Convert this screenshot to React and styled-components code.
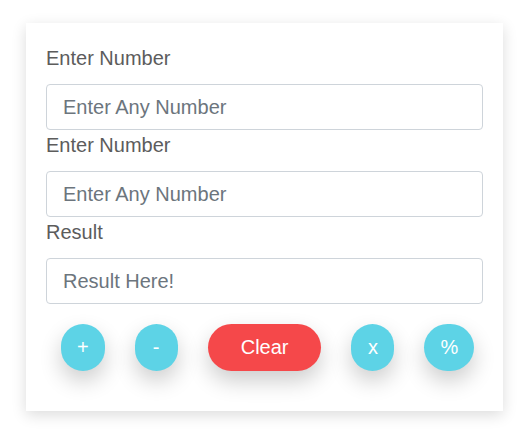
import React from 'react';
import styled, { createGlobalStyle } from 'styled-components';

const GlobalStyle = createGlobalStyle`
	body {
		margin: 0;
		background: #fff;
		font-family: "Liberation Sans", Arial, sans-serif;
	}
`

const Page = styled.div`
	padding: 23px 0 30px 26px;
`

const Card = styled.div`
	width: 477px;
	box-sizing: border-box;
	padding: 20px 20px 40px;
	background: #fff;
	box-shadow: 0 4px 14px rgba(0, 0, 0, 0.14);
`

const Label = styled.label`
	display: block;
	font-size: 20px;
	line-height: 30px;
	color: #5c5c5c;
	margin-bottom: 11px;
`

const Input = styled.input`
	display: block;
	width: 100%;
	height: 46px;
	box-sizing: border-box;
	padding: 0 16px;
	border: 1px solid #ced4da;
	border-radius: 4px;
	font-family: inherit;
	font-size: 20px;
	color: #495057;
	outline: none;

	&::placeholder {
		color: #6c757d;
		opacity: 1;
	}
`

const Buttons = styled.div`
	display: flex;
	align-items: center;
	gap: 30px;
	margin-top: 20px;
	padding-left: 15px;
`

const Button = styled.button`
	min-width: 43px;
	padding: 12px ${p => (p.wide ? '33px' : '16px')};
	border: none;
	border-radius: 50px;
	background: ${p => (p.danger ? '#f5484a' : '#5dd3e6')};
	color: #fff;
	font-family: inherit;
	font-size: 20px;
	line-height: 23px;
	text-align: center;
	box-shadow: 0 10px 22px rgba(0, 0, 0, 0.2);
	cursor: pointer;
`

const Field = ({ label, placeholder }) => (
	<div>
		<Label>{label}</Label>
		<Input placeholder={placeholder} />
	</div>
)

export default function App() {
	return (
		<Page>
			<GlobalStyle />
			<Card>
				<Field label="Enter Number" placeholder="Enter Any Number" />
				<Field label="Enter Number" placeholder="Enter Any Number" />
				<Field label="Result" placeholder="Result Here!" />
				<Buttons>
					<Button>+</Button>
					<Button>-</Button>
					<Button danger wide>Clear</Button>
					<Button>x</Button>
					<Button>%</Button>
				</Buttons>
			</Card>
		</Page>
	)
}
